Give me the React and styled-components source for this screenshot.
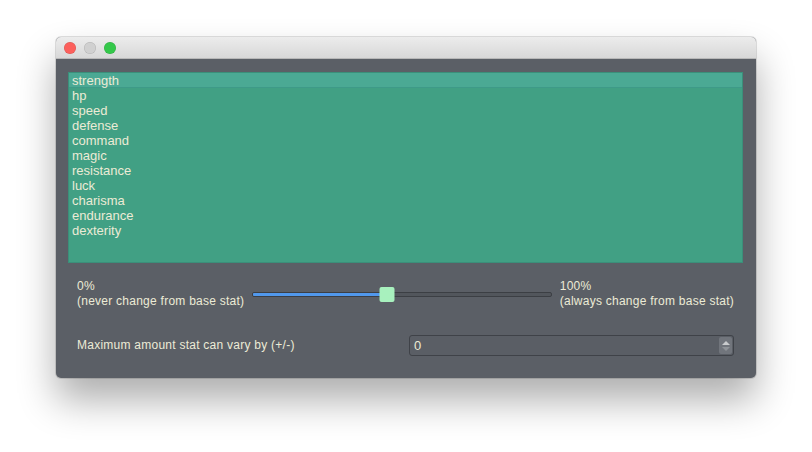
import React from "react";
import styled, { createGlobalStyle } from "styled-components";

const stats = [
  "strength",
  "hp",
  "speed",
  "defense",
  "command",
  "magic",
  "resistance",
  "luck",
  "charisma",
  "endurance",
  "dexterity",
];

const GlobalStyle = createGlobalStyle`
  html, body {
    margin: 0;
    background: #ffffff;
  }
  body {
    font-family: "Liberation Sans", Arial, sans-serif;
  }
`;

const Desktop = styled.div`
  height: 452px;
  box-sizing: border-box;
  padding: 37px 0 0 56px;
  background: #ffffff;
`;

const Window = styled.div`
  width: 700px;
  height: 341px;
  border-radius: 5px;
  overflow: hidden;
  display: flex;
  flex-direction: column;
  background: #5b5f66;
  box-shadow: 0 0 0 1px rgba(0, 0, 0, 0.12), 0 22px 38px rgba(0, 0, 0, 0.32);
`;

const TitleBar = styled.div`
  height: 22px;
  flex: none;
  display: flex;
  align-items: center;
  gap: 8px;
  padding-left: 8px;
  background: linear-gradient(#ececec, #d8d8d8);
  border-bottom: 1px solid #b8b8b8;
  box-sizing: border-box;
`;

const Light = styled.span`
  width: 12px;
  height: 12px;
  border-radius: 50%;
  background: ${(p) => p.$color};
  box-shadow: inset 0 0 0 0.5px rgba(0, 0, 0, 0.15);
`;

const Content = styled.div`
  flex: 1;
  display: flex;
  flex-direction: column;
  padding: 13px 13px 0 12px;
  color: #ecebd6;
  font-size: 12px;
  letter-spacing: 0.25px;
`;

const List = styled.div`
  height: 191px;
  background: #41a084;
  border: 1px solid #3b8f7a;
  box-sizing: border-box;
  display: flex;
  flex-direction: column;
  font-size: 13px;
  letter-spacing: 0;
`;

const Item = styled.div`
  height: 15px;
  line-height: 14px;
  padding: 1px 0 0 3px;
  background: ${(p) => (p.$selected ? "#4ba994" : "transparent")};
  border-bottom: ${(p) => (p.$selected ? "1px solid #3e9a88" : "none")};
  box-sizing: border-box;
`;

const Controls = styled.div`
  padding: 16px 9px 0;
  display: flex;
  flex-direction: column;
  gap: 26px;
`;

const SliderRow = styled.div`
  display: flex;
  align-items: center;
  gap: 8px;
`;

const Caption = styled.div`
  line-height: 15px;
  white-space: nowrap;
`;

const Slider = styled.div`
  flex: 1;
  height: 15px;
  position: relative;
  display: flex;
  align-items: center;
`;

const Track = styled.div`
  width: 100%;
  height: 5px;
  border-radius: 2px;
  background: #52565c;
  border: 1px solid #3c3f44;
  box-sizing: border-box;
  overflow: hidden;
`;

const Fill = styled.div`
  height: 100%;
  background: #5198ec;
`;

const Handle = styled.div`
  position: absolute;
  top: 0;
  width: 15px;
  height: 15px;
  border-radius: 2px;
  background: #a8f1be;
  transform: translateX(-50%);
`;

const SpinRow = styled.div`
  display: grid;
  grid-template-columns: 332px 1fr;
  align-items: center;
`;

const SpinBox = styled.div`
  height: 21px;
  display: flex;
  border: 1px solid #3f4248;
  border-radius: 3px;
  background: #5a5e65;
  box-sizing: border-box;
`;

const SpinValue = styled.div`
  flex: 1;
  padding-left: 4px;
  line-height: 19px;
  font-size: 13px;
`;

const SpinButtons = styled.div`
  width: 13px;
  margin: 1px;
  border-radius: 2px;
  background: #71757c;
  display: flex;
  flex-direction: column;
  align-items: center;
  justify-content: center;
  gap: 2px;
`;

const Arrow = styled.span`
  width: 0;
  height: 0;
  border-left: 4px solid transparent;
  border-right: 4px solid transparent;
  ${(p) =>
    p.$up
      ? "border-bottom: 4px solid #c9cbcd;"
      : "border-top: 4px solid #8f9398;"}
`;

export default function App() {
  const value = 0.447;
  return (
    <>
      <GlobalStyle />
      <Desktop>
        <Window>
          <TitleBar>
            <Light $color="#fc605c" />
            <Light $color="#d0d0d0" />
            <Light $color="#34c84a" />
          </TitleBar>
          <Content>
            <List>
              {stats.map((s, i) => (
                <Item key={s} $selected={i === 0}>
                  {s}
                </Item>
              ))}
            </List>
            <Controls>
              <SliderRow>
                <Caption>
                  0%
                  <br />
                  (never change from base stat)
                </Caption>
                <Slider>
                  <Track>
                    <Fill style={{ width: `${value * 100 + 1}%` }} />
                  </Track>
                  <Handle style={{ left: `calc(7.5px + ${value} * (100% - 15px))` }} />
                </Slider>
                <Caption>
                  100%
                  <br />
                  (always change from base stat)
                </Caption>
              </SliderRow>
              <SpinRow>
                <Caption>Maximum amount stat can vary by (+/-)</Caption>
                <SpinBox>
                  <SpinValue>0</SpinValue>
                  <SpinButtons>
                    <Arrow $up />
                    <Arrow />
                  </SpinButtons>
                </SpinBox>
              </SpinRow>
            </Controls>
          </Content>
        </Window>
      </Desktop>
    </>
  );
}
